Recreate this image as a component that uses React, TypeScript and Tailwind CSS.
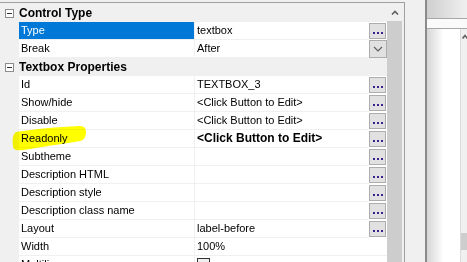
import React from "react";

type Prop = {
  name: string;
  value?: string;
  btn?: "dots" | "drop" | "check";
  bold?: boolean;
  selected?: boolean;
};

type Category = { title: string; items: Prop[] };

const EDIT = "<Click Button to Edit>";

const categories: Category[] = [
  {
    title: "Control Type",
    items: [
      { name: "Type", value: "textbox", btn: "dots", selected: true },
      { name: "Break", value: "After", btn: "drop" },
    ],
  },
  {
    title: "Textbox Properties",
    items: [
      { name: "Id", value: "TEXTBOX_3", btn: "dots" },
      { name: "Show/hide", value: EDIT, btn: "dots" },
      { name: "Disable", value: EDIT, btn: "dots" },
      { name: "Readonly", value: EDIT, btn: "dots", bold: true },
      { name: "Subtheme", btn: "dots" },
      { name: "Description HTML", btn: "dots" },
      { name: "Description style", btn: "dots" },
      { name: "Description class name", btn: "dots" },
      { name: "Layout", value: "label-before", btn: "dots" },
      { name: "Width", value: "100%" },
      { name: "Multiline", btn: "check" },
    ],
  },
];

function DotsButton() {
  return (
    <div className="mt-[1px] flex h-[16px] w-[17px] items-center justify-center gap-[2px] border border-[#adadad] bg-[#e1e1e1] pt-[3px]">
      {[0, 1, 2].map((i) => (
        <span key={i} className="h-[2px] w-[2px] bg-[#3b1f8c]" />
      ))}
    </div>
  );
}

function DropButton() {
  return (
    <div className="flex h-[18px] w-[18px] items-center justify-center border border-[#adadad] bg-[#e1e1e1]">
      <svg width="10" height="6" viewBox="0 0 10 6">
        <path d="M1 1 L5 5 L9 1" fill="none" stroke="#606060" strokeWidth="1.2" />
      </svg>
    </div>
  );
}

function Row({ p }: { p: Prop }) {
  return (
    <div className="flex h-[18px]">
      <div className="w-[19px] shrink-0 bg-[#f0f0f0]" />
      <div
        className={`w-[176px] shrink-0 border-r border-b border-[#f0f0f0] pl-[2px] text-[11px] leading-[17px] ${
          p.selected ? "bg-[#0078d7] text-white" : "bg-white text-black"
        }`}
      >
        {p.name}
      </div>
      <div className="flex min-w-0 flex-1 bg-white">
        <div
          className={`min-w-0 flex-1 overflow-hidden whitespace-nowrap border-b border-[#f0f0f0] pl-[2px] text-black ${
            p.bold ? "text-[12px] font-bold leading-[17px]" : "text-[11px] leading-[17px]"
          }`}
        >
          {p.btn === "check" ? (
            <div className="mt-[2px] h-[13px] w-[13px] border border-[#333333] bg-[#efefef]" />
          ) : (
            p.value
          )}
        </div>
        {p.btn === "dots" && (
          <div className="w-[18px] shrink-0">
            <DotsButton />
          </div>
        )}
        {p.btn === "drop" && (
          <div className="w-[18px] shrink-0">
            <DropButton />
          </div>
        )}
      </div>
    </div>
  );
}

function Header({ title }: { title: string }) {
  return (
    <div className="flex h-[18px] items-center bg-[#f0f0f0]">
      <div className="flex w-[19px] shrink-0 justify-start pl-[5px]">
        <div className="flex h-[9px] w-[9px] items-center justify-center border border-[#8c8c8c] bg-white">
          <span className="h-[1px] w-[5px] bg-[#333333]" />
        </div>
      </div>
      <span className="text-[12px] font-bold leading-[18px] text-black">{title}</span>
    </div>
  );
}

export default function App() {
  return (
    <div
      className="relative flex h-[262px] w-[467px] overflow-hidden bg-[#f0f0f0]"
      style={{ fontFamily: '"Liberation Sans", Arial, sans-serif' }}
    >
      {/* Property grid */}
      <div className="mt-[2px] flex w-[405px] shrink-0 border-t border-r border-[#a0a0a0] pt-[1px] pr-[2px]">
        <div className="flex w-[387px] shrink-0 flex-col">
          {categories.map((c) => (
            <div key={c.title}>
              <Header title={c.title} />
              {c.items.map((p) => (
                <Row key={p.name} p={p} />
              ))}
            </div>
          ))}
        </div>
        {/* Scrollbar */}
        <div className="flex w-[15px] shrink-0 flex-col">
          <div className="flex h-[17px] items-center justify-center">
            <svg width="8" height="5" viewBox="0 0 8 5">
              <path d="M1 4.5 L4 1.5 L7 4.5" fill="none" stroke="#606060" strokeWidth="1.6" />
            </svg>
          </div>
          <div className="flex-1 bg-[#cdcdcd]" />
        </div>
      </div>

      {/* gap */}
      <div className="w-[20px] shrink-0" />
      <div className="w-[2px] shrink-0 bg-[#8a8a8a]" />

      {/* Right window */}
      <div className="flex flex-1 flex-col">
        <div className="h-[18px] bg-gradient-to-r from-[#cfcfcf] to-[#f0f0f0]" />
        <div className="h-[11px] border-y border-[#a8a8a8] bg-[#fafafa]" />
        <div className="flex flex-1">
          <div className="flex-1 bg-gradient-to-r from-[#d6d6d6] via-white to-white" />
          <div className="flex w-[7px] flex-col border-l border-[#dcdcdc] bg-[#f0f0f0]">
            <div className="mt-[5px] pl-[1px]">
              <svg width="6" height="5" viewBox="0 0 6 5">
                <path d="M0.5 4.5 L3 1.5 L5.5 4.5" fill="none" stroke="#606060" strokeWidth="1.6" />
              </svg>
            </div>
            <div className="mt-[194px] h-[17px] bg-[#cdcdcd]" />
          </div>
        </div>
      </div>

      {/* Yellow marker highlight */}
      <svg
        className="pointer-events-none absolute left-[12px] top-[125px] mix-blend-multiply"
        width="76"
        height="27"
        viewBox="0 0 76 27"
      >
        <path
          d="M1 21 C0 14 1 9 4 7 C22 4 46 2 67 1 C72 1 74 3 74 7 C74 12 72 15 68 16 C50 19 28 22 12 25 C5 26 1 25 1 21 Z"
          fill="#ffff00"
        />
      </svg>
    </div>
  );
}
